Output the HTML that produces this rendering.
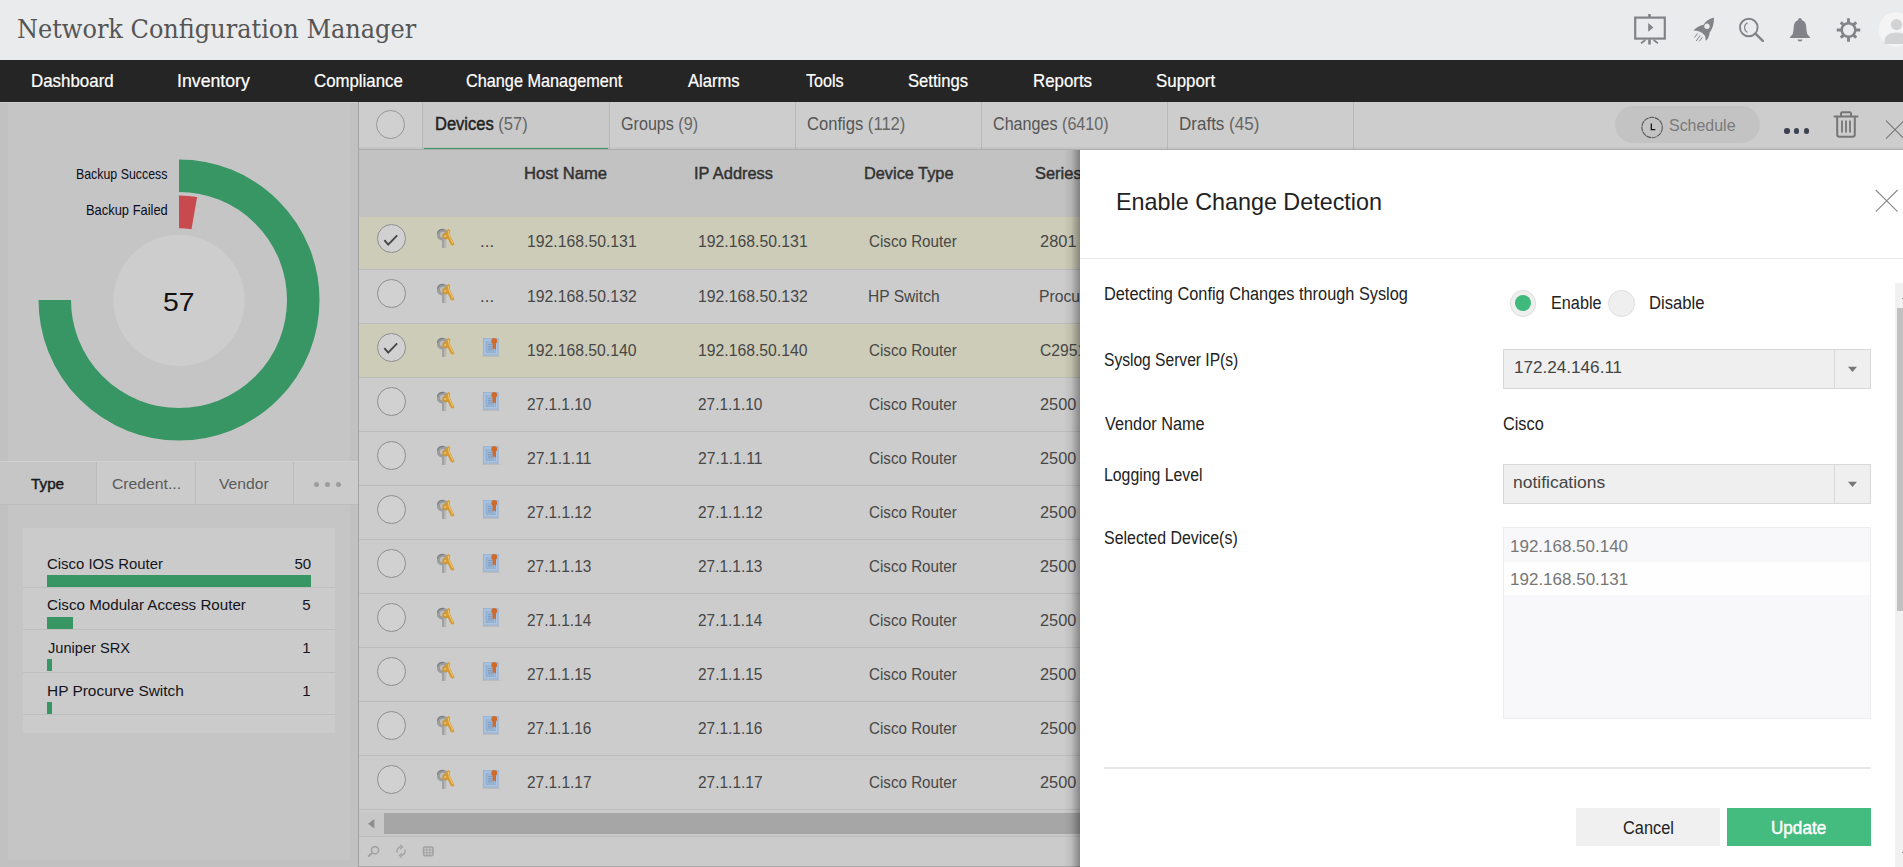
<!DOCTYPE html>
<html lang="en">
<head>
<meta charset="utf-8">
<title>Network Configuration Manager</title>
<style>
*{box-sizing:border-box;margin:0;padding:0}
html,body{width:1903px;height:867px;overflow:hidden;background:#c5c5c5;font-family:"Liberation Sans",sans-serif}
.a{position:absolute;display:block}
.t{position:absolute;white-space:nowrap;line-height:1}
.p{display:inline-block;width:0;height:0}
.t b{font-weight:400;-webkit-text-stroke:0.45px currentColor}
</style>
</head>
<body>

<div class="a" style="left:0px;top:0px;width:1903px;height:60px;background:#eaebec;"></div>
<div class="a" style="left:0px;top:60px;width:1903px;height:41.7px;background:#252525;"></div>
<div class="a" style="left:0px;top:101.6px;width:358px;height:766px;background:#c1c1c1;"></div>
<div class="a" style="left:0px;top:101.6px;width:358px;height:1.2px;background:#cfcfcf;"></div>
<div class="a" style="left:8px;top:103px;width:342px;height:757px;background:#c5c5c5;"></div>
<div class="a" style="left:358px;top:101.6px;width:1px;height:766px;background:#a2a2a2;"></div>
<svg class="a" style="left:0;top:101px" width="358" height="360" viewBox="0 101 358 360">
<circle cx="179" cy="300.3" r="65.6" fill="#cdcdcd"/>
<path d="M179 175.75 A124.25 124.25 0 1 1 54.75 300" fill="none" stroke="#389665" stroke-width="32.5"/>
<path d="M179 211.8 A88.2 88.2 0 0 1 194.3 213.1" fill="none" stroke="#c8494e" stroke-width="32.8"/>
</svg>
<div class="a" style="left:0px;top:461px;width:358px;height:1px;background:#d0d0d0;"></div>
<div class="a" style="left:0px;top:462px;width:358px;height:42px;background:#cbcbcb;"></div>
<div class="a" style="left:0px;top:462px;width:96px;height:42px;background:#c6c6c6;"></div>
<div class="a" style="left:0px;top:504px;width:358px;height:1px;background:#bdbdbd;"></div>
<div class="a" style="left:96px;top:462px;width:1px;height:42px;background:#bcbcbc;"></div>
<div class="a" style="left:195px;top:462px;width:1px;height:42px;background:#bcbcbc;"></div>
<div class="a" style="left:293px;top:462px;width:1px;height:42px;background:#bcbcbc;"></div>
<div class="a" style="left:314.0px;top:481.6px;width:5.4px;height:5.4px;background:#9c9c9c;border-radius:50%"></div>
<div class="a" style="left:325.0px;top:481.6px;width:5.4px;height:5.4px;background:#9c9c9c;border-radius:50%"></div>
<div class="a" style="left:336.0px;top:481.6px;width:5.4px;height:5.4px;background:#9c9c9c;border-radius:50%"></div>
<div class="a" style="left:23px;top:528px;width:312px;height:204.5px;background:#cbcbcb;"></div>
<div class="a" style="left:47px;top:575.2px;width:264px;height:11.5px;background:#389665;"></div>
<div class="a" style="left:23px;top:586.7px;width:312px;height:1.2px;background:#bebebe;"></div>
<div class="a" style="left:47px;top:617px;width:26px;height:11.5px;background:#389665;"></div>
<div class="a" style="left:23px;top:629.0px;width:312px;height:1.2px;background:#bebebe;"></div>
<div class="a" style="left:47px;top:659.2px;width:5px;height:11.5px;background:#389665;"></div>
<div class="a" style="left:23px;top:671.7px;width:312px;height:1.2px;background:#bebebe;"></div>
<div class="a" style="left:47px;top:702.1px;width:5px;height:11.5px;background:#389665;"></div>
<div class="a" style="left:23px;top:713.7px;width:312px;height:1.2px;background:#bebebe;"></div>
<div class="a" style="left:359px;top:101.6px;width:1544px;height:47.4px;background:#cdcdcd;"></div>
<div class="a" style="left:422px;top:101.6px;width:187px;height:47.4px;background:#c9c9c9;"></div>
<div class="a" style="left:422px;top:101.6px;width:1px;height:47.4px;background:#b8b8b8;"></div>
<div class="a" style="left:609px;top:101.6px;width:1px;height:47.4px;background:#b8b8b8;"></div>
<div class="a" style="left:795px;top:101.6px;width:1px;height:47.4px;background:#b8b8b8;"></div>
<div class="a" style="left:981px;top:101.6px;width:1px;height:47.4px;background:#b8b8b8;"></div>
<div class="a" style="left:1167px;top:101.6px;width:1px;height:47.4px;background:#b8b8b8;"></div>
<div class="a" style="left:1353px;top:101.6px;width:1px;height:47.4px;background:#b8b8b8;"></div>
<div class="a" style="left:359px;top:147px;width:1544px;height:2px;background:rgba(0,0,0,.035);"></div>
<div class="a" style="left:359px;top:149px;width:1544px;height:1px;background:#adadad;"></div>
<div class="a" style="left:424px;top:147.6px;width:184px;height:1.3px;background:#3a9866;"></div>
<div class="a" style="left:376px;top:110.3px;width:29.2px;height:29.2px;background:#d0d0d0;border-radius:50%;border:1px solid #979797"></div>
<div class="a" style="left:1615px;top:106px;width:145px;height:37px;background:#c3c3c3;border-radius:19px"></div>
<svg class="a" style="left:1640px;top:115px" width="24" height="24" viewBox="0 0 24 24"><circle cx="12.1" cy="12.5" r="10.2" fill="none" stroke="#555" stroke-width="1.1" stroke-dasharray="5 0.6"/><path d="M11.3 8.4V14.5H15.3" fill="none" stroke="#111" stroke-width="1.25"/></svg>
<div class="a" style="left:1784.4499999999998px;top:128.35px;width:5.3px;height:5.3px;background:#3d4252;border-radius:50%"></div>
<div class="a" style="left:1794.05px;top:128.35px;width:5.3px;height:5.3px;background:#3d4252;border-radius:50%"></div>
<div class="a" style="left:1803.55px;top:128.35px;width:5.3px;height:5.3px;background:#3d4252;border-radius:50%"></div>
<svg class="a" style="left:1832px;top:109px" width="28" height="30" viewBox="0 0 28 30"><g fill="none" stroke="#767676" stroke-width="2" stroke-linecap="round" stroke-linejoin="round"><path d="M2.5 7.5H25.5"/><path d="M9 7V4.6Q9 3.3 10.3 3.3H17.7Q19 3.3 19 4.6V7"/><path d="M5.2 8V25.5Q5.2 27.8 7.5 27.8H20.5Q22.8 27.8 22.8 25.5V8"/></g><g fill="none" stroke="#767676" stroke-width="1.8"><path d="M10 11.5V23.5M14 11.5V23.5M18 11.5V23.5"/></g></svg>
<svg class="a" style="left:1884px;top:119px" width="19" height="22" viewBox="0 0 19 22"><path d="M2 1.7L20 19.7M20 1.7L2 19.7" stroke="#777" stroke-width="1.1" fill="none"/></svg>
<div class="a" style="left:359px;top:150px;width:1544px;height:66.6px;background:#c2c2c2;"></div>
<div class="a" style="left:359px;top:216.6px;width:1544px;height:52.599999999999994px;background:#cdccb8;"></div>
<div class="a" style="left:376.90000000000003px;top:224.1px;width:28.8px;height:28.8px;background:#d1d1d1;border-radius:50%;border:1px solid #8e8e8e"></div>
<svg class="a" style="left:381.3px;top:228.5px" width="20" height="20" viewBox="-10 -10 20 20"><path d="M-6.6 1.2L-2.8 5.6L6.2 -3.6" fill="none" stroke="#474747" stroke-width="1.9"/></svg>
<svg class="a" style="left:436px;top:228.0px" width="20" height="21" viewBox="0 0 20 21"><rect x="2.5" y="2.6" width="8.6" height="8.4" rx="3.6" fill="#bdbdbd" stroke="#9c9c9c" stroke-width="3"/><path d="M1.5 5.6Q1.9 1.3 7.8 1.4" stroke="#787b80" stroke-width="1.1" fill="none"/><rect x="6.3" y="11.4" width="3.9" height="8.6" fill="#b6b6b6"/><rect x="6.3" y="11.4" width="1.4" height="8.6" fill="#989898"/><circle cx="9.6" cy="8" r="3.3" fill="#cf9636"/><path d="M12.3 0.7L14.3 2.4L13.6 6L18.5 16.2L16.6 17.7L14.6 16.6L11.2 9.6L9.4 7L10.3 3Z" fill="#d39b3a"/><path d="M12.5 2.6L13 7L17 15.6" stroke="#ecc267" stroke-width="1.1" fill="none"/><circle cx="9.2" cy="8.2" r="1.1" fill="#e9c06a"/></svg>
<div class="a" style="left:359px;top:269.2px;width:1544px;height:54.0px;background:#cccccc;"></div>
<div class="a" style="left:376.90000000000003px;top:278.90000000000003px;width:28.8px;height:28.8px;background:#d1d1d1;border-radius:50%;border:1px solid #8e8e8e"></div>
<svg class="a" style="left:436px;top:282.8px" width="20" height="21" viewBox="0 0 20 21"><rect x="2.5" y="2.6" width="8.6" height="8.4" rx="3.6" fill="#bdbdbd" stroke="#9c9c9c" stroke-width="3"/><path d="M1.5 5.6Q1.9 1.3 7.8 1.4" stroke="#787b80" stroke-width="1.1" fill="none"/><rect x="6.3" y="11.4" width="3.9" height="8.6" fill="#b6b6b6"/><rect x="6.3" y="11.4" width="1.4" height="8.6" fill="#989898"/><circle cx="9.6" cy="8" r="3.3" fill="#cf9636"/><path d="M12.3 0.7L14.3 2.4L13.6 6L18.5 16.2L16.6 17.7L14.6 16.6L11.2 9.6L9.4 7L10.3 3Z" fill="#d39b3a"/><path d="M12.5 2.6L13 7L17 15.6" stroke="#ecc267" stroke-width="1.1" fill="none"/><circle cx="9.2" cy="8.2" r="1.1" fill="#e9c06a"/></svg>
<div class="a" style="left:359px;top:323.2px;width:1544px;height:54.0px;background:#cdccb8;"></div>
<div class="a" style="left:376.90000000000003px;top:332.90000000000003px;width:28.8px;height:28.8px;background:#d1d1d1;border-radius:50%;border:1px solid #8e8e8e"></div>
<svg class="a" style="left:381.3px;top:337.3px" width="20" height="20" viewBox="-10 -10 20 20"><path d="M-6.6 1.2L-2.8 5.6L6.2 -3.6" fill="none" stroke="#474747" stroke-width="1.9"/></svg>
<svg class="a" style="left:436px;top:336.8px" width="20" height="21" viewBox="0 0 20 21"><rect x="2.5" y="2.6" width="8.6" height="8.4" rx="3.6" fill="#bdbdbd" stroke="#9c9c9c" stroke-width="3"/><path d="M1.5 5.6Q1.9 1.3 7.8 1.4" stroke="#787b80" stroke-width="1.1" fill="none"/><rect x="6.3" y="11.4" width="3.9" height="8.6" fill="#b6b6b6"/><rect x="6.3" y="11.4" width="1.4" height="8.6" fill="#989898"/><circle cx="9.6" cy="8" r="3.3" fill="#cf9636"/><path d="M12.3 0.7L14.3 2.4L13.6 6L18.5 16.2L16.6 17.7L14.6 16.6L11.2 9.6L9.4 7L10.3 3Z" fill="#d39b3a"/><path d="M12.5 2.6L13 7L17 15.6" stroke="#ecc267" stroke-width="1.1" fill="none"/><circle cx="9.2" cy="8.2" r="1.1" fill="#e9c06a"/></svg>
<svg class="a" style="left:482px;top:337.3px" width="18" height="20" viewBox="0 0 18 20"><rect x="0.9" y="1" width="15.8" height="17.8" fill="#9bb6d5"/><rect x="0.2" y="18.8" width="17.4" height="0.9" fill="#b3b6ba"/><rect x="2.9" y="3" width="11.8" height="13.8" fill="none" stroke="#b3c9e3" stroke-width="1"/><path d="M6 7.6H10.4M6 9.6H10.4M6 11.2H10.4M6 13H10.4" stroke="#7f9fc6" stroke-width="1" fill="none"/><path d="M4.3 4.6V15M5 15.2H13.4" stroke="#86a4c9" stroke-width="0.9" stroke-dasharray="1 1" fill="none"/><circle cx="12.2" cy="3.9" r="2.9" fill="#cf6b2a"/><path d="M10.6 5.6V13L12.3 11.2L14 13V5.6Z" fill="#cf6b2a"/></svg>
<div class="a" style="left:359px;top:377.2px;width:1544px;height:54.0px;background:#cccccc;"></div>
<div class="a" style="left:376.90000000000003px;top:386.90000000000003px;width:28.8px;height:28.8px;background:#d1d1d1;border-radius:50%;border:1px solid #8e8e8e"></div>
<svg class="a" style="left:436px;top:390.8px" width="20" height="21" viewBox="0 0 20 21"><rect x="2.5" y="2.6" width="8.6" height="8.4" rx="3.6" fill="#bdbdbd" stroke="#9c9c9c" stroke-width="3"/><path d="M1.5 5.6Q1.9 1.3 7.8 1.4" stroke="#787b80" stroke-width="1.1" fill="none"/><rect x="6.3" y="11.4" width="3.9" height="8.6" fill="#b6b6b6"/><rect x="6.3" y="11.4" width="1.4" height="8.6" fill="#989898"/><circle cx="9.6" cy="8" r="3.3" fill="#cf9636"/><path d="M12.3 0.7L14.3 2.4L13.6 6L18.5 16.2L16.6 17.7L14.6 16.6L11.2 9.6L9.4 7L10.3 3Z" fill="#d39b3a"/><path d="M12.5 2.6L13 7L17 15.6" stroke="#ecc267" stroke-width="1.1" fill="none"/><circle cx="9.2" cy="8.2" r="1.1" fill="#e9c06a"/></svg>
<svg class="a" style="left:482px;top:391.3px" width="18" height="20" viewBox="0 0 18 20"><rect x="0.9" y="1" width="15.8" height="17.8" fill="#9bb6d5"/><rect x="0.2" y="18.8" width="17.4" height="0.9" fill="#b3b6ba"/><rect x="2.9" y="3" width="11.8" height="13.8" fill="none" stroke="#b3c9e3" stroke-width="1"/><path d="M6 7.6H10.4M6 9.6H10.4M6 11.2H10.4M6 13H10.4" stroke="#7f9fc6" stroke-width="1" fill="none"/><path d="M4.3 4.6V15M5 15.2H13.4" stroke="#86a4c9" stroke-width="0.9" stroke-dasharray="1 1" fill="none"/><circle cx="12.2" cy="3.9" r="2.9" fill="#cf6b2a"/><path d="M10.6 5.6V13L12.3 11.2L14 13V5.6Z" fill="#cf6b2a"/></svg>
<div class="a" style="left:359px;top:431.2px;width:1544px;height:54.0px;background:#cccccc;"></div>
<div class="a" style="left:376.90000000000003px;top:440.90000000000003px;width:28.8px;height:28.8px;background:#d1d1d1;border-radius:50%;border:1px solid #8e8e8e"></div>
<svg class="a" style="left:436px;top:444.8px" width="20" height="21" viewBox="0 0 20 21"><rect x="2.5" y="2.6" width="8.6" height="8.4" rx="3.6" fill="#bdbdbd" stroke="#9c9c9c" stroke-width="3"/><path d="M1.5 5.6Q1.9 1.3 7.8 1.4" stroke="#787b80" stroke-width="1.1" fill="none"/><rect x="6.3" y="11.4" width="3.9" height="8.6" fill="#b6b6b6"/><rect x="6.3" y="11.4" width="1.4" height="8.6" fill="#989898"/><circle cx="9.6" cy="8" r="3.3" fill="#cf9636"/><path d="M12.3 0.7L14.3 2.4L13.6 6L18.5 16.2L16.6 17.7L14.6 16.6L11.2 9.6L9.4 7L10.3 3Z" fill="#d39b3a"/><path d="M12.5 2.6L13 7L17 15.6" stroke="#ecc267" stroke-width="1.1" fill="none"/><circle cx="9.2" cy="8.2" r="1.1" fill="#e9c06a"/></svg>
<svg class="a" style="left:482px;top:445.3px" width="18" height="20" viewBox="0 0 18 20"><rect x="0.9" y="1" width="15.8" height="17.8" fill="#9bb6d5"/><rect x="0.2" y="18.8" width="17.4" height="0.9" fill="#b3b6ba"/><rect x="2.9" y="3" width="11.8" height="13.8" fill="none" stroke="#b3c9e3" stroke-width="1"/><path d="M6 7.6H10.4M6 9.6H10.4M6 11.2H10.4M6 13H10.4" stroke="#7f9fc6" stroke-width="1" fill="none"/><path d="M4.3 4.6V15M5 15.2H13.4" stroke="#86a4c9" stroke-width="0.9" stroke-dasharray="1 1" fill="none"/><circle cx="12.2" cy="3.9" r="2.9" fill="#cf6b2a"/><path d="M10.6 5.6V13L12.3 11.2L14 13V5.6Z" fill="#cf6b2a"/></svg>
<div class="a" style="left:359px;top:485.2px;width:1544px;height:54.00000000000006px;background:#cccccc;"></div>
<div class="a" style="left:376.90000000000003px;top:494.90000000000003px;width:28.8px;height:28.8px;background:#d1d1d1;border-radius:50%;border:1px solid #8e8e8e"></div>
<svg class="a" style="left:436px;top:498.8px" width="20" height="21" viewBox="0 0 20 21"><rect x="2.5" y="2.6" width="8.6" height="8.4" rx="3.6" fill="#bdbdbd" stroke="#9c9c9c" stroke-width="3"/><path d="M1.5 5.6Q1.9 1.3 7.8 1.4" stroke="#787b80" stroke-width="1.1" fill="none"/><rect x="6.3" y="11.4" width="3.9" height="8.6" fill="#b6b6b6"/><rect x="6.3" y="11.4" width="1.4" height="8.6" fill="#989898"/><circle cx="9.6" cy="8" r="3.3" fill="#cf9636"/><path d="M12.3 0.7L14.3 2.4L13.6 6L18.5 16.2L16.6 17.7L14.6 16.6L11.2 9.6L9.4 7L10.3 3Z" fill="#d39b3a"/><path d="M12.5 2.6L13 7L17 15.6" stroke="#ecc267" stroke-width="1.1" fill="none"/><circle cx="9.2" cy="8.2" r="1.1" fill="#e9c06a"/></svg>
<svg class="a" style="left:482px;top:499.3px" width="18" height="20" viewBox="0 0 18 20"><rect x="0.9" y="1" width="15.8" height="17.8" fill="#9bb6d5"/><rect x="0.2" y="18.8" width="17.4" height="0.9" fill="#b3b6ba"/><rect x="2.9" y="3" width="11.8" height="13.8" fill="none" stroke="#b3c9e3" stroke-width="1"/><path d="M6 7.6H10.4M6 9.6H10.4M6 11.2H10.4M6 13H10.4" stroke="#7f9fc6" stroke-width="1" fill="none"/><path d="M4.3 4.6V15M5 15.2H13.4" stroke="#86a4c9" stroke-width="0.9" stroke-dasharray="1 1" fill="none"/><circle cx="12.2" cy="3.9" r="2.9" fill="#cf6b2a"/><path d="M10.6 5.6V13L12.3 11.2L14 13V5.6Z" fill="#cf6b2a"/></svg>
<div class="a" style="left:359px;top:539.2px;width:1544px;height:54.0px;background:#cccccc;"></div>
<div class="a" style="left:376.90000000000003px;top:548.9px;width:28.8px;height:28.8px;background:#d1d1d1;border-radius:50%;border:1px solid #8e8e8e"></div>
<svg class="a" style="left:436px;top:552.8px" width="20" height="21" viewBox="0 0 20 21"><rect x="2.5" y="2.6" width="8.6" height="8.4" rx="3.6" fill="#bdbdbd" stroke="#9c9c9c" stroke-width="3"/><path d="M1.5 5.6Q1.9 1.3 7.8 1.4" stroke="#787b80" stroke-width="1.1" fill="none"/><rect x="6.3" y="11.4" width="3.9" height="8.6" fill="#b6b6b6"/><rect x="6.3" y="11.4" width="1.4" height="8.6" fill="#989898"/><circle cx="9.6" cy="8" r="3.3" fill="#cf9636"/><path d="M12.3 0.7L14.3 2.4L13.6 6L18.5 16.2L16.6 17.7L14.6 16.6L11.2 9.6L9.4 7L10.3 3Z" fill="#d39b3a"/><path d="M12.5 2.6L13 7L17 15.6" stroke="#ecc267" stroke-width="1.1" fill="none"/><circle cx="9.2" cy="8.2" r="1.1" fill="#e9c06a"/></svg>
<svg class="a" style="left:482px;top:553.3px" width="18" height="20" viewBox="0 0 18 20"><rect x="0.9" y="1" width="15.8" height="17.8" fill="#9bb6d5"/><rect x="0.2" y="18.8" width="17.4" height="0.9" fill="#b3b6ba"/><rect x="2.9" y="3" width="11.8" height="13.8" fill="none" stroke="#b3c9e3" stroke-width="1"/><path d="M6 7.6H10.4M6 9.6H10.4M6 11.2H10.4M6 13H10.4" stroke="#7f9fc6" stroke-width="1" fill="none"/><path d="M4.3 4.6V15M5 15.2H13.4" stroke="#86a4c9" stroke-width="0.9" stroke-dasharray="1 1" fill="none"/><circle cx="12.2" cy="3.9" r="2.9" fill="#cf6b2a"/><path d="M10.6 5.6V13L12.3 11.2L14 13V5.6Z" fill="#cf6b2a"/></svg>
<div class="a" style="left:359px;top:593.2px;width:1544px;height:54.0px;background:#cccccc;"></div>
<div class="a" style="left:376.90000000000003px;top:602.9px;width:28.8px;height:28.8px;background:#d1d1d1;border-radius:50%;border:1px solid #8e8e8e"></div>
<svg class="a" style="left:436px;top:606.8px" width="20" height="21" viewBox="0 0 20 21"><rect x="2.5" y="2.6" width="8.6" height="8.4" rx="3.6" fill="#bdbdbd" stroke="#9c9c9c" stroke-width="3"/><path d="M1.5 5.6Q1.9 1.3 7.8 1.4" stroke="#787b80" stroke-width="1.1" fill="none"/><rect x="6.3" y="11.4" width="3.9" height="8.6" fill="#b6b6b6"/><rect x="6.3" y="11.4" width="1.4" height="8.6" fill="#989898"/><circle cx="9.6" cy="8" r="3.3" fill="#cf9636"/><path d="M12.3 0.7L14.3 2.4L13.6 6L18.5 16.2L16.6 17.7L14.6 16.6L11.2 9.6L9.4 7L10.3 3Z" fill="#d39b3a"/><path d="M12.5 2.6L13 7L17 15.6" stroke="#ecc267" stroke-width="1.1" fill="none"/><circle cx="9.2" cy="8.2" r="1.1" fill="#e9c06a"/></svg>
<svg class="a" style="left:482px;top:607.3px" width="18" height="20" viewBox="0 0 18 20"><rect x="0.9" y="1" width="15.8" height="17.8" fill="#9bb6d5"/><rect x="0.2" y="18.8" width="17.4" height="0.9" fill="#b3b6ba"/><rect x="2.9" y="3" width="11.8" height="13.8" fill="none" stroke="#b3c9e3" stroke-width="1"/><path d="M6 7.6H10.4M6 9.6H10.4M6 11.2H10.4M6 13H10.4" stroke="#7f9fc6" stroke-width="1" fill="none"/><path d="M4.3 4.6V15M5 15.2H13.4" stroke="#86a4c9" stroke-width="0.9" stroke-dasharray="1 1" fill="none"/><circle cx="12.2" cy="3.9" r="2.9" fill="#cf6b2a"/><path d="M10.6 5.6V13L12.3 11.2L14 13V5.6Z" fill="#cf6b2a"/></svg>
<div class="a" style="left:359px;top:647.2px;width:1544px;height:54.0px;background:#cccccc;"></div>
<div class="a" style="left:376.90000000000003px;top:656.9px;width:28.8px;height:28.8px;background:#d1d1d1;border-radius:50%;border:1px solid #8e8e8e"></div>
<svg class="a" style="left:436px;top:660.8px" width="20" height="21" viewBox="0 0 20 21"><rect x="2.5" y="2.6" width="8.6" height="8.4" rx="3.6" fill="#bdbdbd" stroke="#9c9c9c" stroke-width="3"/><path d="M1.5 5.6Q1.9 1.3 7.8 1.4" stroke="#787b80" stroke-width="1.1" fill="none"/><rect x="6.3" y="11.4" width="3.9" height="8.6" fill="#b6b6b6"/><rect x="6.3" y="11.4" width="1.4" height="8.6" fill="#989898"/><circle cx="9.6" cy="8" r="3.3" fill="#cf9636"/><path d="M12.3 0.7L14.3 2.4L13.6 6L18.5 16.2L16.6 17.7L14.6 16.6L11.2 9.6L9.4 7L10.3 3Z" fill="#d39b3a"/><path d="M12.5 2.6L13 7L17 15.6" stroke="#ecc267" stroke-width="1.1" fill="none"/><circle cx="9.2" cy="8.2" r="1.1" fill="#e9c06a"/></svg>
<svg class="a" style="left:482px;top:661.3px" width="18" height="20" viewBox="0 0 18 20"><rect x="0.9" y="1" width="15.8" height="17.8" fill="#9bb6d5"/><rect x="0.2" y="18.8" width="17.4" height="0.9" fill="#b3b6ba"/><rect x="2.9" y="3" width="11.8" height="13.8" fill="none" stroke="#b3c9e3" stroke-width="1"/><path d="M6 7.6H10.4M6 9.6H10.4M6 11.2H10.4M6 13H10.4" stroke="#7f9fc6" stroke-width="1" fill="none"/><path d="M4.3 4.6V15M5 15.2H13.4" stroke="#86a4c9" stroke-width="0.9" stroke-dasharray="1 1" fill="none"/><circle cx="12.2" cy="3.9" r="2.9" fill="#cf6b2a"/><path d="M10.6 5.6V13L12.3 11.2L14 13V5.6Z" fill="#cf6b2a"/></svg>
<div class="a" style="left:359px;top:701.2px;width:1544px;height:54.0px;background:#cccccc;"></div>
<div class="a" style="left:376.90000000000003px;top:710.9px;width:28.8px;height:28.8px;background:#d1d1d1;border-radius:50%;border:1px solid #8e8e8e"></div>
<svg class="a" style="left:436px;top:714.8px" width="20" height="21" viewBox="0 0 20 21"><rect x="2.5" y="2.6" width="8.6" height="8.4" rx="3.6" fill="#bdbdbd" stroke="#9c9c9c" stroke-width="3"/><path d="M1.5 5.6Q1.9 1.3 7.8 1.4" stroke="#787b80" stroke-width="1.1" fill="none"/><rect x="6.3" y="11.4" width="3.9" height="8.6" fill="#b6b6b6"/><rect x="6.3" y="11.4" width="1.4" height="8.6" fill="#989898"/><circle cx="9.6" cy="8" r="3.3" fill="#cf9636"/><path d="M12.3 0.7L14.3 2.4L13.6 6L18.5 16.2L16.6 17.7L14.6 16.6L11.2 9.6L9.4 7L10.3 3Z" fill="#d39b3a"/><path d="M12.5 2.6L13 7L17 15.6" stroke="#ecc267" stroke-width="1.1" fill="none"/><circle cx="9.2" cy="8.2" r="1.1" fill="#e9c06a"/></svg>
<svg class="a" style="left:482px;top:715.3px" width="18" height="20" viewBox="0 0 18 20"><rect x="0.9" y="1" width="15.8" height="17.8" fill="#9bb6d5"/><rect x="0.2" y="18.8" width="17.4" height="0.9" fill="#b3b6ba"/><rect x="2.9" y="3" width="11.8" height="13.8" fill="none" stroke="#b3c9e3" stroke-width="1"/><path d="M6 7.6H10.4M6 9.6H10.4M6 11.2H10.4M6 13H10.4" stroke="#7f9fc6" stroke-width="1" fill="none"/><path d="M4.3 4.6V15M5 15.2H13.4" stroke="#86a4c9" stroke-width="0.9" stroke-dasharray="1 1" fill="none"/><circle cx="12.2" cy="3.9" r="2.9" fill="#cf6b2a"/><path d="M10.6 5.6V13L12.3 11.2L14 13V5.6Z" fill="#cf6b2a"/></svg>
<div class="a" style="left:359px;top:755.2px;width:1544px;height:54.0px;background:#cccccc;"></div>
<div class="a" style="left:376.90000000000003px;top:764.9px;width:28.8px;height:28.8px;background:#d1d1d1;border-radius:50%;border:1px solid #8e8e8e"></div>
<svg class="a" style="left:436px;top:768.8px" width="20" height="21" viewBox="0 0 20 21"><rect x="2.5" y="2.6" width="8.6" height="8.4" rx="3.6" fill="#bdbdbd" stroke="#9c9c9c" stroke-width="3"/><path d="M1.5 5.6Q1.9 1.3 7.8 1.4" stroke="#787b80" stroke-width="1.1" fill="none"/><rect x="6.3" y="11.4" width="3.9" height="8.6" fill="#b6b6b6"/><rect x="6.3" y="11.4" width="1.4" height="8.6" fill="#989898"/><circle cx="9.6" cy="8" r="3.3" fill="#cf9636"/><path d="M12.3 0.7L14.3 2.4L13.6 6L18.5 16.2L16.6 17.7L14.6 16.6L11.2 9.6L9.4 7L10.3 3Z" fill="#d39b3a"/><path d="M12.5 2.6L13 7L17 15.6" stroke="#ecc267" stroke-width="1.1" fill="none"/><circle cx="9.2" cy="8.2" r="1.1" fill="#e9c06a"/></svg>
<svg class="a" style="left:482px;top:769.3px" width="18" height="20" viewBox="0 0 18 20"><rect x="0.9" y="1" width="15.8" height="17.8" fill="#9bb6d5"/><rect x="0.2" y="18.8" width="17.4" height="0.9" fill="#b3b6ba"/><rect x="2.9" y="3" width="11.8" height="13.8" fill="none" stroke="#b3c9e3" stroke-width="1"/><path d="M6 7.6H10.4M6 9.6H10.4M6 11.2H10.4M6 13H10.4" stroke="#7f9fc6" stroke-width="1" fill="none"/><path d="M4.3 4.6V15M5 15.2H13.4" stroke="#86a4c9" stroke-width="0.9" stroke-dasharray="1 1" fill="none"/><circle cx="12.2" cy="3.9" r="2.9" fill="#cf6b2a"/><path d="M10.6 5.6V13L12.3 11.2L14 13V5.6Z" fill="#cf6b2a"/></svg>
<div class="a" style="left:359px;top:268.5px;width:1544px;height:1.2px;background:#bbbcbd;"></div>
<div class="a" style="left:359px;top:322.5px;width:1544px;height:1.2px;background:#bbbcbd;"></div>
<div class="a" style="left:359px;top:376.5px;width:1544px;height:1.2px;background:#bbbcbd;"></div>
<div class="a" style="left:359px;top:430.5px;width:1544px;height:1.2px;background:#bbbcbd;"></div>
<div class="a" style="left:359px;top:484.5px;width:1544px;height:1.2px;background:#bbbcbd;"></div>
<div class="a" style="left:359px;top:538.5px;width:1544px;height:1.2px;background:#bbbcbd;"></div>
<div class="a" style="left:359px;top:592.5px;width:1544px;height:1.2px;background:#bbbcbd;"></div>
<div class="a" style="left:359px;top:646.5px;width:1544px;height:1.2px;background:#bbbcbd;"></div>
<div class="a" style="left:359px;top:700.5px;width:1544px;height:1.2px;background:#bbbcbd;"></div>
<div class="a" style="left:359px;top:754.5px;width:1544px;height:1.2px;background:#bbbcbd;"></div>
<div class="a" style="left:359px;top:808.5px;width:1544px;height:1.2px;background:#bbbcbd;"></div>
<div class="a" style="left:359px;top:809.6px;width:1544px;height:2px;background:#cccccc;"></div>
<div class="a" style="left:359px;top:811.5px;width:1544px;height:24px;background:#c8c8c8;"></div>
<div class="a" style="left:384px;top:813px;width:1519px;height:20.6px;background:#a6a6a6;"></div>
<svg class="a" style="left:366px;top:817px" width="10" height="14" viewBox="0 0 10 14"><path d="M8.4 2V11.6L2 6.8Z" fill="#8e8e8e"/></svg>
<div class="a" style="left:359px;top:835.6px;width:1544px;height:1px;background:#bdbdbd;"></div>
<div class="a" style="left:359px;top:836.6px;width:1544px;height:29.4px;background:#cbcbcb;"></div>
<div class="a" style="left:359px;top:866px;width:1544px;height:1px;background:#a9a9a9;"></div>
<svg class="a" style="left:366px;top:844px" width="70" height="14" viewBox="0 0 70 14"><g fill="none" stroke="#a3a3a3" stroke-width="1.6">
<circle cx="9" cy="6.2" r="3.6"/><path d="M6.4 8.8L2.2 12.6" stroke-width="2"/>
<path d="M31.2 8.6A4.3 4.3 0 0 1 35.4 2.8M38.8 5.6A4.3 4.3 0 0 1 34.6 11.4" stroke-width="1.5"/>
<path d="M34 0.6L36.6 2.9L34 5.2M36 9.1L33.4 11.4L36 13.7" stroke-width="1.2"/>
<rect x="57.6" y="3" width="9.4" height="8.6" rx="1"/><path d="M57.6 6H67M57.6 8.8H67M60.8 3V11.6M63.9 3V11.6" stroke-width="1"/></g></svg>
<svg class="a" style="left:1630px;top:10px" width="273" height="42" viewBox="1630 10 273 42">
<g fill="none" stroke="#808387" stroke-width="1.9">
<rect x="1635.2" y="17.6" width="29.6" height="21" stroke-width="2.2"/>
<path d="M1649.5 14V17M1649.5 39.5V44.6" stroke-width="2.6"/><path d="M1645.4 40L1641 43.2M1653.6 40L1658 43.2" stroke-width="1.7"/>
<circle cx="1748.8" cy="27.5" r="8.8"/><path d="M1755.4 33.6L1762.8 40.8" stroke-width="2.5" stroke-linecap="round"/>
<path d="M1747.6 22.8A5.4 5.4 0 0 0 1747.4 32.4" stroke-width="1.1"/>
</g>
<g fill="#808387">
<path d="M1648.2 23L1653.4 27.4L1648.2 31.8Z"/>
<path d="M1713.9 17.8C1709 18.5 1705.5 21.5 1703.7 24.7C1700 25.5 1696 27.5 1693.3 30.6C1695.5 30.5 1697.5 30.8 1699.2 31.5C1701.5 32.5 1703.8 34 1704.9 35.8C1705.6 37.2 1705.7 39 1705.6 40.7C1707.6 39.5 1709 37.5 1709.6 32.7C1712.5 29 1714.2 23.5 1713.9 17.8ZM1707 23.5A2.8 2.8 0 1 0 1707.01 23.5Z" fill-rule="evenodd"/>
<path d="M1697.6 33.6L1694.4 37.6M1700.2 35.4L1696.2 41M1702.4 37.2L1699.4 41.2" stroke="#808387" stroke-width="1" fill="none"/>
<path d="M1800 18.1C1801 18.1 1801.7 18.9 1801.7 19.9C1804.6 20.9 1806 23.4 1806.2 26.2C1806.5 30 1806.8 33 1807.6 34.6L1809.9 37V38.1H1790.1V37L1792.4 34.6C1793.2 33 1793.5 30 1793.8 26.2C1794 23.4 1795.4 20.9 1798.3 19.9C1798.3 18.9 1799 18.1 1800 18.1Z"/>
<path d="M1797.6 39.4H1802.4A2.4 2.1 0 0 1 1797.6 39.4Z"/>
</g>
<g transform="translate(1848.5 30)"><circle r="6.8" fill="none" stroke="#808387" stroke-width="2.5"/><g fill="#808387"><g transform="rotate(0)"><rect x="-1.45" y="-11.8" width="2.9" height="4.6" rx="0.5"/></g><g transform="rotate(90)"><rect x="-1.45" y="-11.8" width="2.9" height="4.6" rx="0.5"/></g><g transform="rotate(180)"><rect x="-1.45" y="-11.8" width="2.9" height="4.6" rx="0.5"/></g><g transform="rotate(270)"><rect x="-1.45" y="-11.8" width="2.9" height="4.6" rx="0.5"/></g><g transform="rotate(45)"><rect x="-1.45" y="-10.9" width="2.9" height="3.8" rx="0.5"/></g><g transform="rotate(135)"><rect x="-1.45" y="-10.9" width="2.9" height="3.8" rx="0.5"/></g><g transform="rotate(225)"><rect x="-1.45" y="-10.9" width="2.9" height="3.8" rx="0.5"/></g><g transform="rotate(315)"><rect x="-1.45" y="-10.9" width="2.9" height="3.8" rx="0.5"/></g></g></g>
<circle cx="1896" cy="29.5" r="17.2" fill="#f4f4f4"/>
<circle cx="1896.5" cy="24.6" r="5.6" fill="#d2d3d4"/>
<path d="M1884.5 41.5C1884.5 35.5 1889.5 32.6 1896.5 32.6S1908.5 35.5 1908.5 41.5V44H1884.5Z" fill="#d2d3d4"/>
</svg>
<div class="t" id="t0" style="top:16.40px;font-size:26.5px;color:#555555;font-family:'DejaVu Serif Condensed','DejaVu Serif','Liberation Serif',serif;font-stretch:condensed;left:16.83px;transform:scaleX(1.0074);transform-origin:0 50%;">Network Configuration Manager</div>
<div class="t" id="t1" style="top:73.20px;font-size:17.8px;color:#ffffff;-webkit-text-stroke:0.22px currentColor;left:31.01px;transform:scaleX(0.9503);transform-origin:0 50%;">Dashboard</div>
<div class="t" id="t2" style="top:73.20px;font-size:17.8px;color:#ffffff;-webkit-text-stroke:0.22px currentColor;left:176.76px;transform:scaleX(0.9963);transform-origin:0 50%;">Inventory</div>
<div class="t" id="t3" style="top:73.20px;font-size:17.8px;color:#ffffff;-webkit-text-stroke:0.22px currentColor;left:313.55px;transform:scaleX(0.9458);transform-origin:0 50%;">Compliance</div>
<div class="t" id="t4" style="top:73.20px;font-size:17.8px;color:#ffffff;-webkit-text-stroke:0.22px currentColor;left:466.32px;transform:scaleX(0.9145);transform-origin:0 50%;">Change Management</div>
<div class="t" id="t5" style="top:73.20px;font-size:17.8px;color:#ffffff;-webkit-text-stroke:0.22px currentColor;left:688.37px;transform:scaleX(0.9323);transform-origin:0 50%;">Alarms</div>
<div class="t" id="t6" style="top:73.20px;font-size:17.8px;color:#ffffff;-webkit-text-stroke:0.22px currentColor;left:805.54px;transform:scaleX(0.9068);transform-origin:0 50%;">Tools</div>
<div class="t" id="t7" style="top:73.20px;font-size:17.8px;color:#ffffff;-webkit-text-stroke:0.22px currentColor;left:908.04px;transform:scaleX(0.9363);transform-origin:0 50%;">Settings</div>
<div class="t" id="t8" style="top:73.20px;font-size:17.8px;color:#ffffff;-webkit-text-stroke:0.22px currentColor;left:1032.72px;transform:scaleX(0.9474);transform-origin:0 50%;">Reports</div>
<div class="t" id="t9" style="top:73.20px;font-size:17.8px;color:#ffffff;-webkit-text-stroke:0.22px currentColor;left:1156.03px;transform:scaleX(0.9504);transform-origin:0 50%;">Support</div>
<div class="t" id="t10" style="top:167.30px;font-size:14.8px;color:#0c0c20;left:75.79px;transform:scaleX(0.8352);transform-origin:0 50%;">Backup Success</div>
<div class="t" id="t11" style="top:203.20px;font-size:14.8px;color:#0c0c20;left:85.74px;transform:scaleX(0.8721);transform-origin:0 50%;">Backup Failed</div>
<div class="t" id="t12" style="top:289.00px;font-size:26.7px;color:#111;left:163.36px;transform:scaleX(1.0632);transform-origin:0 50%;">57</div>
<div class="t" id="t13" style="top:475.80px;font-size:15.5px;color:#1a1a1a;-webkit-text-stroke:0.45px currentColor;left:30.76px;transform:scaleX(0.9855);transform-origin:0 50%;">Type</div>
<div class="t" id="t14" style="top:475.80px;font-size:15.5px;color:#5a5a5a;left:111.80px;transform:scaleX(1.0143);transform-origin:0 50%;">Credent...</div>
<div class="t" id="t15" style="top:475.80px;font-size:15.5px;color:#5a5a5a;left:218.93px;transform:scaleX(1.0120);transform-origin:0 50%;">Vendor</div>
<div class="t" id="t16" style="top:556.00px;font-size:15.4px;color:#141420;left:47.34px;transform:scaleX(0.9679);transform-origin:0 50%;">Cisco IOS Router</div>
<div class="t" id="t17" style="top:556.00px;font-size:15.4px;color:#141420;right:1592.31px;transform:scaleX(0.9765);transform-origin:100% 50%;">50</div>
<div class="t" id="t18" style="top:597.40px;font-size:15.4px;color:#141420;left:47.33px;transform:scaleX(0.9854);transform-origin:0 50%;">Cisco Modular Access Router</div>
<div class="t" id="t19" style="top:597.40px;font-size:15.4px;color:#141420;right:1592.27px;transform:scaleX(0.9765);transform-origin:100% 50%;">5</div>
<div class="t" id="t20" style="top:639.90px;font-size:15.4px;color:#141420;left:47.87px;transform:scaleX(0.9506);transform-origin:0 50%;">Juniper SRX</div>
<div class="t" id="t21" style="top:639.90px;font-size:15.4px;color:#141420;right:1592.17px;transform:scaleX(0.9765);transform-origin:100% 50%;">1</div>
<div class="t" id="t22" style="top:682.90px;font-size:15.4px;color:#141420;left:46.83px;transform:scaleX(1.0021);transform-origin:0 50%;">HP Procurve Switch</div>
<div class="t" id="t23" style="top:682.90px;font-size:15.4px;color:#141420;right:1592.17px;transform:scaleX(0.9765);transform-origin:100% 50%;">1</div>
<div class="t" id="t24" style="top:116.10px;font-size:17.5px;color:#222;left:435.15px;transform:scaleX(0.9433);transform-origin:0 50%;"><b>Devices</b> <span style="color:#666">(57)</span></div>
<div class="t" id="t25" style="top:116.10px;font-size:17.5px;color:#555;left:621.44px;transform:scaleX(0.9213);transform-origin:0 50%;">Groups <span style="color:#666">(9)</span></div>
<div class="t" id="t26" style="top:116.10px;font-size:17.5px;color:#555;left:807.16px;transform:scaleX(0.9480);transform-origin:0 50%;">Configs <span style="color:#666">(112)</span></div>
<div class="t" id="t27" style="top:116.10px;font-size:17.5px;color:#555;left:993.48px;transform:scaleX(0.9211);transform-origin:0 50%;">Changes <span style="color:#666">(6410)</span></div>
<div class="t" id="t28" style="top:116.10px;font-size:17.5px;color:#555;left:1179.10px;transform:scaleX(0.9719);transform-origin:0 50%;">Drafts <span style="color:#666">(45)</span></div>
<div class="t" id="t29" style="top:116.60px;font-size:17px;color:#7a7a7a;left:1669.08px;transform:scaleX(0.9385);transform-origin:0 50%;">Schedule</div>
<div class="t" id="t30" style="top:166.00px;font-size:16px;color:#333;-webkit-text-stroke:0.45px currentColor;left:524.34px;transform:scaleX(1.0384);transform-origin:0 50%;">Host Name</div>
<div class="t" id="t31" style="top:166.00px;font-size:16px;color:#333;-webkit-text-stroke:0.45px currentColor;left:694.29px;transform:scaleX(1.0248);transform-origin:0 50%;">IP Address</div>
<div class="t" id="t32" style="top:166.00px;font-size:16px;color:#333;-webkit-text-stroke:0.45px currentColor;left:864.46px;transform:scaleX(1.0195);transform-origin:0 50%;">Device Type</div>
<div class="t" id="t33" style="top:166.00px;font-size:16px;color:#333;-webkit-text-stroke:0.45px currentColor;left:1034.55px;transform:scaleX(1.0276);transform-origin:0 50%;">Series</div>
<div class="t" id="t34" style="top:233.60px;font-size:15.8px;color:#474747;left:526.80px;transform:scaleX(0.9987);transform-origin:0 50%;">192.168.50.131</div>
<div class="t" id="t35" style="top:233.60px;font-size:15.8px;color:#474747;left:697.70px;transform:scaleX(0.9987);transform-origin:0 50%;">192.168.50.131</div>
<div class="t" id="t36" style="top:233.60px;font-size:15.8px;color:#474747;left:868.63px;transform:scaleX(0.9607);transform-origin:0 50%;">Cisco Router</div>
<div class="t" id="t37" style="top:233.60px;font-size:15.8px;color:#474747;left:1039.57px;transform:scaleX(1.0390);transform-origin:0 50%;">2801</div>
<div class="t" id="t38" style="top:233.60px;font-size:15.8px;color:#444;left:480.46px;transform:scaleX(1.0694);transform-origin:0 50%;">...</div>
<div class="t" id="t39" style="top:288.50px;font-size:15.8px;color:#474747;left:526.80px;transform:scaleX(0.9989);transform-origin:0 50%;">192.168.50.132</div>
<div class="t" id="t40" style="top:288.50px;font-size:15.8px;color:#474747;left:697.70px;transform:scaleX(0.9989);transform-origin:0 50%;">192.168.50.132</div>
<div class="t" id="t41" style="top:288.50px;font-size:15.8px;color:#474747;left:868.12px;transform:scaleX(0.9864);transform-origin:0 50%;">HP Switch</div>
<div class="t" id="t42" style="top:288.50px;font-size:15.8px;color:#474747;left:1039.11px;transform:scaleX(0.9937);transform-origin:0 50%;">Procurve</div>
<div class="t" id="t43" style="top:288.50px;font-size:15.8px;color:#444;left:480.46px;transform:scaleX(1.0694);transform-origin:0 50%;">...</div>
<div class="t" id="t44" style="top:342.50px;font-size:15.8px;color:#474747;left:526.80px;transform:scaleX(0.9973);transform-origin:0 50%;">192.168.50.140</div>
<div class="t" id="t45" style="top:342.50px;font-size:15.8px;color:#474747;left:697.70px;transform:scaleX(0.9973);transform-origin:0 50%;">192.168.50.140</div>
<div class="t" id="t46" style="top:342.50px;font-size:15.8px;color:#474747;left:868.63px;transform:scaleX(0.9607);transform-origin:0 50%;">Cisco Router</div>
<div class="t" id="t47" style="top:342.50px;font-size:15.8px;color:#474747;left:1039.60px;transform:scaleX(0.9937);transform-origin:0 50%;">C2951</div>
<div class="t" id="t48" style="top:396.50px;font-size:15.8px;color:#474747;left:527.22px;transform:scaleX(0.9771);transform-origin:0 50%;">27.1.1.10</div>
<div class="t" id="t49" style="top:396.50px;font-size:15.8px;color:#474747;left:698.12px;transform:scaleX(0.9771);transform-origin:0 50%;">27.1.1.10</div>
<div class="t" id="t50" style="top:396.50px;font-size:15.8px;color:#474747;left:868.63px;transform:scaleX(0.9607);transform-origin:0 50%;">Cisco Router</div>
<div class="t" id="t51" style="top:396.50px;font-size:15.8px;color:#474747;left:1039.58px;transform:scaleX(1.0342);transform-origin:0 50%;">2500</div>
<div class="t" id="t52" style="top:450.50px;font-size:15.8px;color:#474747;left:527.21px;transform:scaleX(0.9976);transform-origin:0 50%;">27.1.1.11</div>
<div class="t" id="t53" style="top:450.50px;font-size:15.8px;color:#474747;left:698.11px;transform:scaleX(0.9976);transform-origin:0 50%;">27.1.1.11</div>
<div class="t" id="t54" style="top:450.50px;font-size:15.8px;color:#474747;left:868.63px;transform:scaleX(0.9607);transform-origin:0 50%;">Cisco Router</div>
<div class="t" id="t55" style="top:450.50px;font-size:15.8px;color:#474747;left:1039.58px;transform:scaleX(1.0342);transform-origin:0 50%;">2500</div>
<div class="t" id="t56" style="top:504.50px;font-size:15.8px;color:#474747;left:527.22px;transform:scaleX(0.9798);transform-origin:0 50%;">27.1.1.12</div>
<div class="t" id="t57" style="top:504.50px;font-size:15.8px;color:#474747;left:698.12px;transform:scaleX(0.9798);transform-origin:0 50%;">27.1.1.12</div>
<div class="t" id="t58" style="top:504.50px;font-size:15.8px;color:#474747;left:868.63px;transform:scaleX(0.9607);transform-origin:0 50%;">Cisco Router</div>
<div class="t" id="t59" style="top:504.50px;font-size:15.8px;color:#474747;left:1039.58px;transform:scaleX(1.0342);transform-origin:0 50%;">2500</div>
<div class="t" id="t60" style="top:558.50px;font-size:15.8px;color:#474747;left:527.22px;transform:scaleX(0.9782);transform-origin:0 50%;">27.1.1.13</div>
<div class="t" id="t61" style="top:558.50px;font-size:15.8px;color:#474747;left:698.12px;transform:scaleX(0.9782);transform-origin:0 50%;">27.1.1.13</div>
<div class="t" id="t62" style="top:558.50px;font-size:15.8px;color:#474747;left:868.63px;transform:scaleX(0.9607);transform-origin:0 50%;">Cisco Router</div>
<div class="t" id="t63" style="top:558.50px;font-size:15.8px;color:#474747;left:1039.58px;transform:scaleX(1.0342);transform-origin:0 50%;">2500</div>
<div class="t" id="t64" style="top:612.50px;font-size:15.8px;color:#474747;left:527.23px;transform:scaleX(0.9747);transform-origin:0 50%;">27.1.1.14</div>
<div class="t" id="t65" style="top:612.50px;font-size:15.8px;color:#474747;left:698.13px;transform:scaleX(0.9747);transform-origin:0 50%;">27.1.1.14</div>
<div class="t" id="t66" style="top:612.50px;font-size:15.8px;color:#474747;left:868.63px;transform:scaleX(0.9607);transform-origin:0 50%;">Cisco Router</div>
<div class="t" id="t67" style="top:612.50px;font-size:15.8px;color:#474747;left:1039.58px;transform:scaleX(1.0342);transform-origin:0 50%;">2500</div>
<div class="t" id="t68" style="top:666.50px;font-size:15.8px;color:#474747;left:527.22px;transform:scaleX(0.9778);transform-origin:0 50%;">27.1.1.15</div>
<div class="t" id="t69" style="top:666.50px;font-size:15.8px;color:#474747;left:698.12px;transform:scaleX(0.9778);transform-origin:0 50%;">27.1.1.15</div>
<div class="t" id="t70" style="top:666.50px;font-size:15.8px;color:#474747;left:868.63px;transform:scaleX(0.9607);transform-origin:0 50%;">Cisco Router</div>
<div class="t" id="t71" style="top:666.50px;font-size:15.8px;color:#474747;left:1039.58px;transform:scaleX(1.0342);transform-origin:0 50%;">2500</div>
<div class="t" id="t72" style="top:720.50px;font-size:15.8px;color:#474747;left:527.22px;transform:scaleX(0.9782);transform-origin:0 50%;">27.1.1.16</div>
<div class="t" id="t73" style="top:720.50px;font-size:15.8px;color:#474747;left:698.12px;transform:scaleX(0.9782);transform-origin:0 50%;">27.1.1.16</div>
<div class="t" id="t74" style="top:720.50px;font-size:15.8px;color:#474747;left:868.63px;transform:scaleX(0.9607);transform-origin:0 50%;">Cisco Router</div>
<div class="t" id="t75" style="top:720.50px;font-size:15.8px;color:#474747;left:1039.58px;transform:scaleX(1.0342);transform-origin:0 50%;">2500</div>
<div class="t" id="t76" style="top:774.50px;font-size:15.8px;color:#474747;left:527.22px;transform:scaleX(0.9798);transform-origin:0 50%;">27.1.1.17</div>
<div class="t" id="t77" style="top:774.50px;font-size:15.8px;color:#474747;left:698.12px;transform:scaleX(0.9798);transform-origin:0 50%;">27.1.1.17</div>
<div class="t" id="t78" style="top:774.50px;font-size:15.8px;color:#474747;left:868.63px;transform:scaleX(0.9607);transform-origin:0 50%;">Cisco Router</div>
<div class="t" id="t79" style="top:774.50px;font-size:15.8px;color:#474747;left:1039.58px;transform:scaleX(1.0342);transform-origin:0 50%;">2500</div>
<div class="a" style="left:1064px;top:150px;width:16px;height:717px;background:linear-gradient(to right,rgba(0,0,0,0),rgba(0,0,0,.07) 45%,rgba(0,0,0,.34));"></div>
<div class="a" style="left:1080px;top:150px;width:823px;height:717px;background:#ffffff;"></div>
<div class="a" style="left:1080px;top:257.8px;width:823px;height:1.2px;background:#e9e9e9;"></div>
<svg class="a" style="left:1874px;top:188px" width="26" height="26" viewBox="0 0 26 26"><path d="M1.8 2L23.6 23.6M23.6 2L1.8 23.6" stroke="#8a8a8a" stroke-width="1.1" fill="none"/></svg>
<div class="a" style="left:1509.7px;top:290px;width:26.6px;height:26.6px;background:#efefef;border-radius:50%;border:1px solid #dedede"></div>
<div class="a" style="left:1515px;top:295.3px;width:16px;height:16px;background:#3fb97c;border-radius:50%"></div>
<div class="a" style="left:1608.1px;top:290px;width:26.6px;height:26.6px;background:#efefef;border-radius:50%;border:1px solid #dedede"></div>
<div class="a" style="left:1503px;top:349px;width:368px;height:39.6px;background:#efefef;border:1px solid #d8d8d8"></div>
<div class="a" style="left:1834px;top:349px;width:1px;height:39.6px;background:#d8d8d8;"></div>
<svg class="a" style="left:1847px;top:365.5px" width="11" height="7" viewBox="0 0 11 7"><path d="M1 0.8H10L5.5 6Z" fill="#777"/></svg>
<div class="a" style="left:1503px;top:464px;width:368px;height:39.6px;background:#efefef;border:1px solid #d8d8d8"></div>
<div class="a" style="left:1834px;top:464px;width:1px;height:39.6px;background:#d8d8d8;"></div>
<svg class="a" style="left:1847px;top:480.5px" width="11" height="7" viewBox="0 0 11 7"><path d="M1 0.8H10L5.5 6Z" fill="#777"/></svg>
<div class="a" style="left:1503px;top:527px;width:368px;height:191.6px;background:#f8f8fa;border:1px solid #ededed"></div>
<div class="a" style="left:1504px;top:561.5px;width:366px;height:33.5px;background:#fefefe;"></div>
<div class="a" style="left:1104px;top:767.2px;width:767px;height:1.6px;background:#e7e7e7;"></div>
<div class="a" style="left:1576px;top:808px;width:144px;height:37.6px;background:#f0f0f0;"></div>
<div class="a" style="left:1727px;top:808px;width:144px;height:37.6px;background:#44bb7f;"></div>
<div class="a" style="left:1895.3px;top:283px;width:8px;height:584px;background:#f1f1f1;"></div>
<div class="a" style="left:1897px;top:308px;width:6px;height:302.5px;background:#c1c1c1;"></div>
<div class="a" style="left:1901.6px;top:297.6px;width:1.4px;height:1.6px;background:#8a8a8a;"></div>
<div class="a" style="left:1901.6px;top:851.6px;width:1.4px;height:1.6px;background:#8a8a8a;"></div>
<div class="t" id="t80" style="top:190.20px;font-size:24px;color:#222;left:1116.09px;transform:scaleX(0.9722);transform-origin:0 50%;">Enable Change Detection</div>
<div class="t" id="t81" style="top:285.40px;font-size:18px;color:#222;left:1103.66px;transform:scaleX(0.9065);transform-origin:0 50%;">Detecting Config Changes through Syslog</div>
<div class="t" id="t82" style="top:351.40px;font-size:18px;color:#222;left:1104.29px;transform:scaleX(0.8660);transform-origin:0 50%;">Syslog Server IP(s)</div>
<div class="t" id="t83" style="top:415.00px;font-size:18px;color:#222;left:1104.93px;transform:scaleX(0.9057);transform-origin:0 50%;">Vendor Name</div>
<div class="t" id="t84" style="top:466.00px;font-size:18px;color:#222;left:1103.70px;transform:scaleX(0.8791);transform-origin:0 50%;">Logging Level</div>
<div class="t" id="t85" style="top:529.00px;font-size:18px;color:#222;left:1104.28px;transform:scaleX(0.8851);transform-origin:0 50%;">Selected Device(s)</div>
<div class="t" id="t86" style="top:294.30px;font-size:18px;color:#222;left:1550.57px;transform:scaleX(0.9017);transform-origin:0 50%;">Enable</div>
<div class="t" id="t87" style="top:294.30px;font-size:18px;color:#222;left:1648.93px;transform:scaleX(0.9246);transform-origin:0 50%;">Disable</div>
<div class="t" id="t88" style="top:358.90px;font-size:17.3px;color:#444;left:1513.50px;transform:scaleX(0.9900);transform-origin:0 50%;">172.24.146.11</div>
<div class="t" id="t89" style="top:414.60px;font-size:18px;color:#222;left:1502.57px;transform:scaleX(0.9044);transform-origin:0 50%;">Cisco</div>
<div class="t" id="t90" style="top:474.20px;font-size:17.3px;color:#444;left:1512.94px;transform:scaleX(1.0113);transform-origin:0 50%;">notifications</div>
<div class="t" id="t91" style="top:537.80px;font-size:17.3px;color:#777;left:1510.10px;transform:scaleX(0.9828);transform-origin:0 50%;">192.168.50.140</div>
<div class="t" id="t92" style="top:570.50px;font-size:17.3px;color:#777;left:1510.10px;transform:scaleX(0.9842);transform-origin:0 50%;">192.168.50.131</div>
<div class="t" id="t93" style="top:819.80px;font-size:17.5px;color:#222;left:1622.57px;transform:scaleX(0.9347);transform-origin:0 50%;">Cancel</div>
<div class="t" id="t94" style="top:819.80px;font-size:17.5px;color:#fff;-webkit-text-stroke:0.45px currentColor;left:1771.28px;transform:scaleX(0.9777);transform-origin:0 50%;">Update</div>
</body>
</html>
